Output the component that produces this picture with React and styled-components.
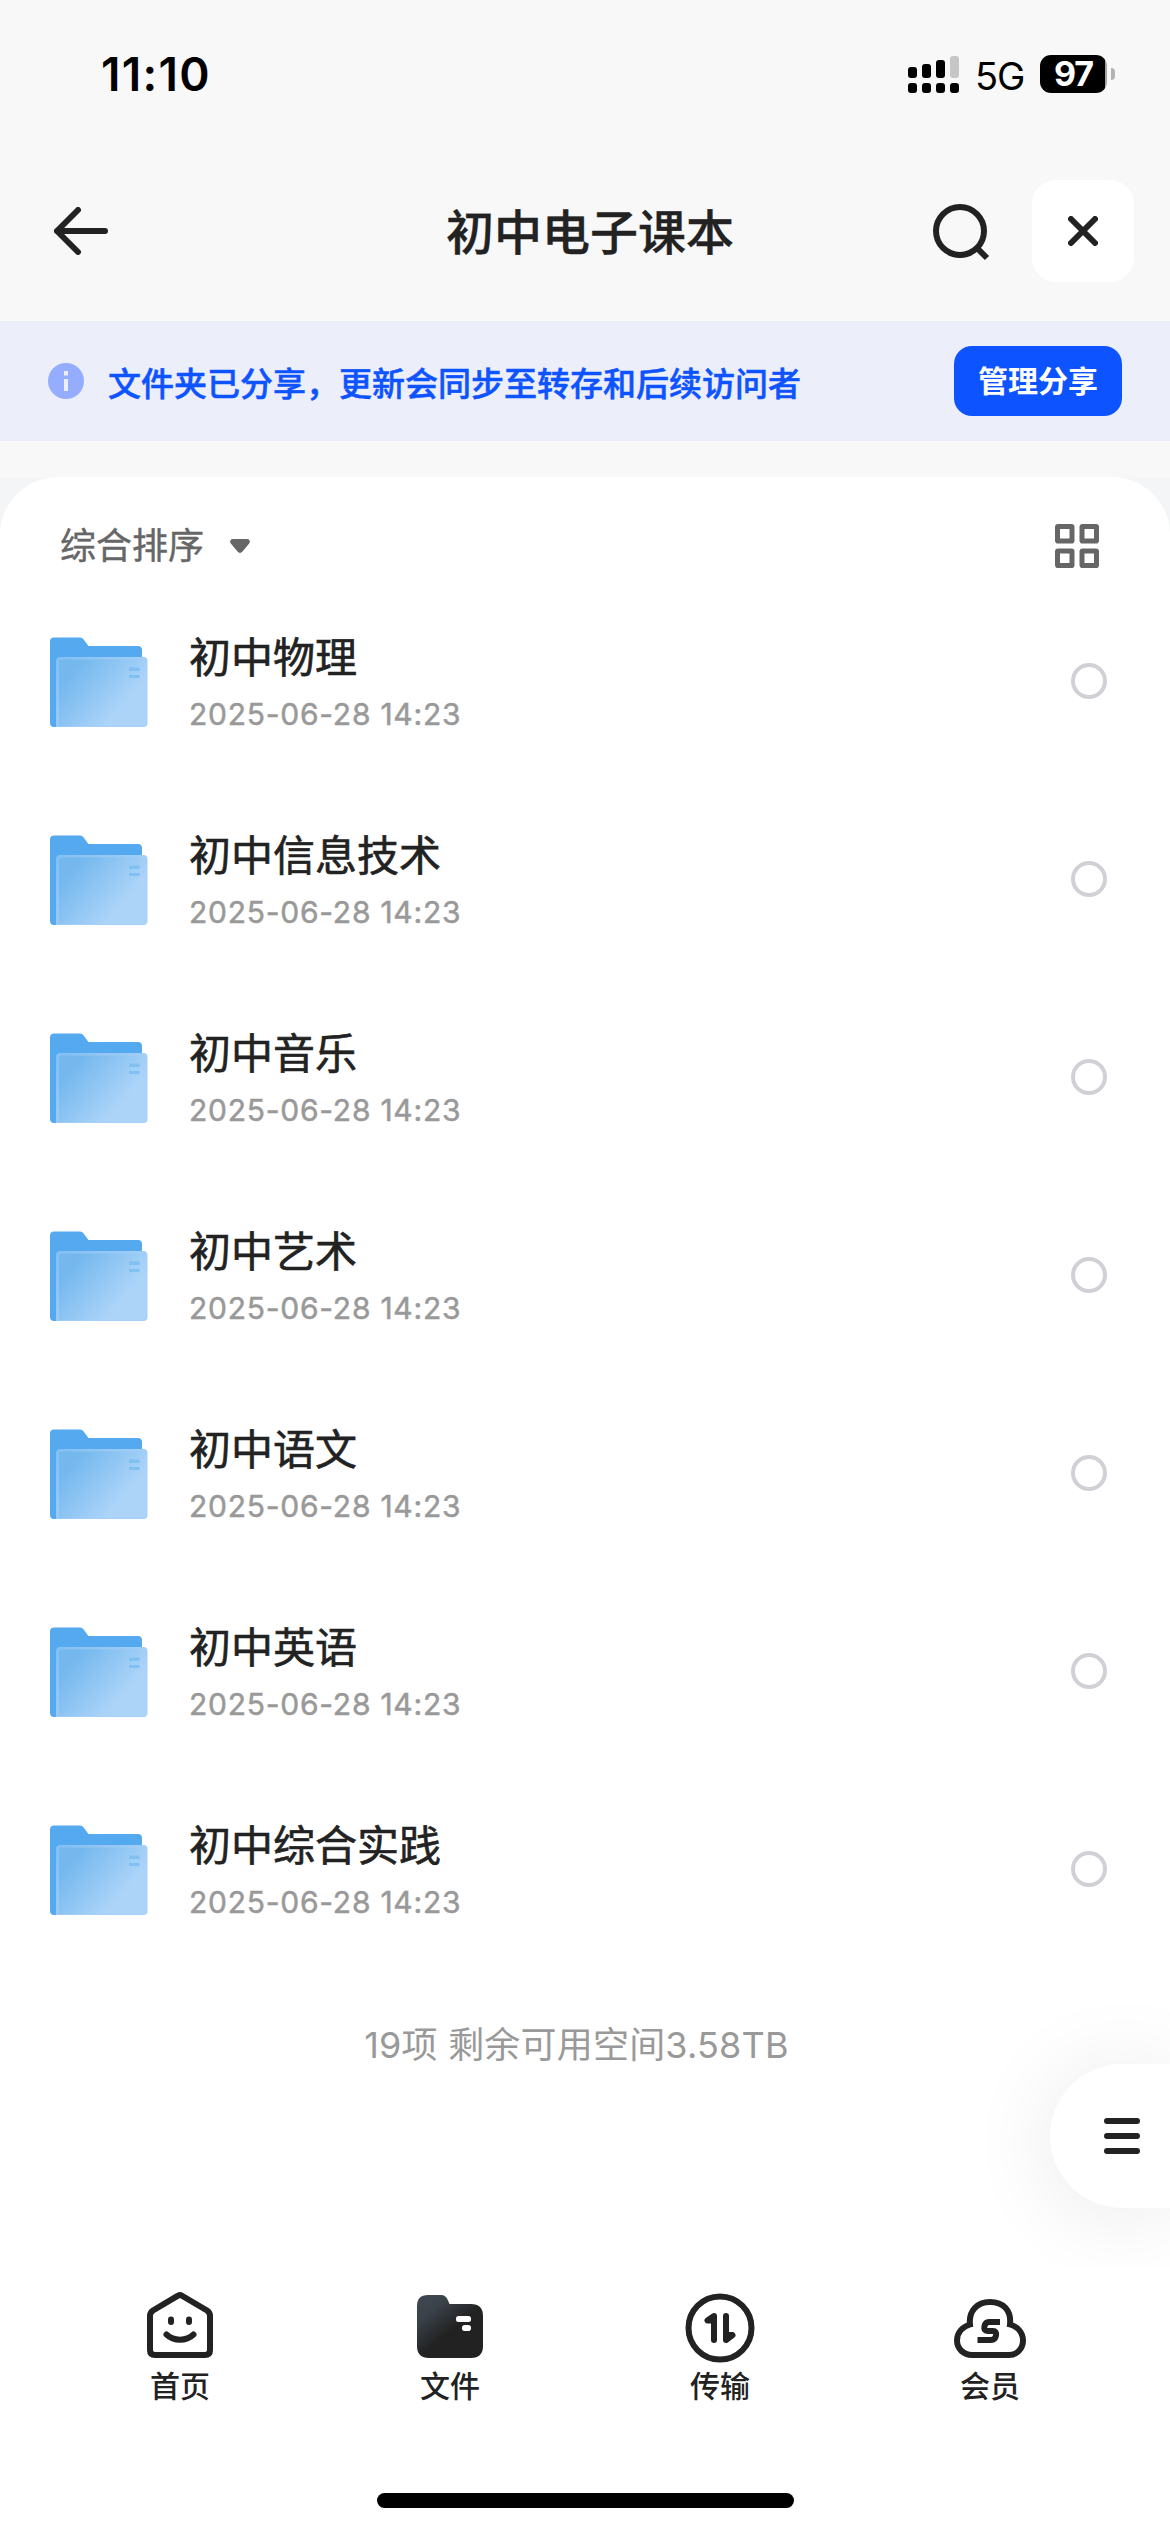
import React from 'react';
import styled, { createGlobalStyle } from 'styled-components';

const folders = [
  '初中物理',
  '初中信息技术',
  '初中音乐',
  '初中艺术',
  '初中语文',
  '初中英语',
  '初中综合实践',
];

const App = () => (
  <Screen lang="zh-CN">
    <GlobalStyle />
    <StatusBar>
      <Time>11:10</Time>
      <StatusIcons>
        <SignalIcon />
        <Network>5G</Network>
        <Battery>
          <BatteryBody>97</BatteryBody>
          <BatteryCap />
        </Battery>
      </StatusIcons>
    </StatusBar>

    <Header>
      <HeaderSide>
        <BackIcon />
      </HeaderSide>
      <Title>初中电子课本</Title>
      <HeaderSide $end>
        <SearchIcon />
        <CloseButton>
          <CloseIcon />
        </CloseButton>
      </HeaderSide>
    </Header>

    <Banner>
      <InfoIcon />
      <BannerText>文件夹已分享，更新会同步至转存和后续访问者</BannerText>
      <ManageButton>管理分享</ManageButton>
    </Banner>

    <Content>
      <Panel>
        <Toolbar>
          <Sort>
            综合排序
            <CaretIcon />
          </Sort>
          <GridIcon />
        </Toolbar>
        {folders.map((name) => (
          <FolderRow key={name} name={name} date="2025-06-28 14:23" />
        ))}
        <Summary>19项 剩余可用空间3.58TB</Summary>
        <Drawer>
          <MenuIcon />
        </Drawer>
      </Panel>
    </Content>

    <TabBar>
      <Tab><HomeIcon /><TabLabel>首页</TabLabel></Tab>
      <Tab><FilesIcon /><TabLabel>文件</TabLabel></Tab>
      <Tab><TransferIcon /><TabLabel>传输</TabLabel></Tab>
      <Tab><MemberIcon /><TabLabel>会员</TabLabel></Tab>
    </TabBar>
    <HomeArea>
      <HomeIndicator />
    </HomeArea>
  </Screen>
);

const FolderRow = (props) => (
  <Row>
    <FolderIcon />
    <RowText>
      <FolderName>{props.name}</FolderName>
      <FolderDate>{props.date}</FolderDate>
    </RowText>
    <Radio />
  </Row>
);

const SignalIcon = () => (
  <svg width="51" height="38" viewBox="0 0 51 38">
    <rect x="0" y="12" width="9" height="11" rx="3" />
    <rect x="14" y="9" width="9" height="14" rx="3" />
    <rect x="28" y="5" width="9" height="18" rx="3" />
    <rect x="42" y="1" width="9" height="22" rx="3" fill="#c6c6c6" />
    <rect x="0" y="28" width="9" height="10" rx="3" />
    <rect x="14" y="28" width="9" height="10" rx="3" />
    <rect x="28" y="28" width="9" height="10" rx="3" />
    <rect x="42" y="28" width="9" height="10" rx="3" />
  </svg>
);

const BackIcon = () => (
  <svg width="54" height="48" viewBox="0 0 54 48" fill="none" stroke="#222" strokeWidth="6" strokeLinecap="round" strokeLinejoin="round">
    <path d="M51 24H3M24 3L3 24L24 45" />
  </svg>
);

const SearchIcon = () => (
  <svg width="60" height="60" viewBox="0 0 60 60" fill="none" stroke="#222" strokeWidth="6">
    <circle cx="30" cy="30" r="24" />
    <path d="M46 46L57 57" />
  </svg>
);

const CloseIcon = () => (
  <svg width="30" height="30" viewBox="0 0 30 30" stroke="#222" strokeWidth="6" strokeLinecap="round">
    <path d="M3 3L27 27M27 3L3 27" />
  </svg>
);

const InfoIcon = () => (
  <svg width="36" height="36" viewBox="0 0 36 36">
    <circle cx="18" cy="18" r="18" fill="#94adff" />
    <rect x="16" y="8" width="4" height="4.5" fill="#eceefa" />
    <rect x="16" y="16" width="4" height="12" fill="#eceefa" />
  </svg>
);

const CaretIcon = () => (
  <svg width="20" height="14" viewBox="0 0 20 14" fill="#666">
    <path d="M3 0H17C19.700 0 20.800 2.800 19 4.800L12.300 12.800C11 14.300 9 14.300 7.700 12.800L1 4.800C-.8 2.800 .3 0 3 0Z" />
  </svg>
);

const GridIcon = () => (
  <svg width="44" height="44" viewBox="0 0 44 44" fill="none" stroke="#666" strokeWidth="5">
    <rect x="2.500" y="2.500" width="14.500" height="14.500" rx=".6" />
    <rect x="27" y="2.500" width="14.500" height="14.500" rx=".6" />
    <rect x="2.500" y="27" width="14.500" height="14.500" rx=".6" />
    <rect x="27" y="27" width="14.500" height="14.500" rx=".6" />
  </svg>
);

const FolderIcon = () => (
  <svg width="98" height="90" viewBox="0 0 98 90">
    <defs>
      <linearGradient id="front" x1="16" y1="28" x2="84" y2="86" gradientUnits="userSpaceOnUse">
        <stop offset="0.1" stopColor="#74b8ee" />
        <stop offset="0.78" stopColor="#acd4f9" />
        <stop offset="1" stopColor="#acd4f9" />
      </linearGradient>
      <linearGradient id="edge" x1="6" y1="20" x2="60" y2="70" gradientUnits="userSpaceOnUse">
        <stop offset="0" stopColor="#82bff1" />
        <stop offset="1" stopColor="#a6d0f8" />
      </linearGradient>
    </defs>
    <path d="M4 0.500H30C32 .5 33 1.500 34 3L38.500 9H88C90.500 9 92 10.500 92 13V60H10V90H4C1.500 90 0 88.500 0 86V4.500C0 2 1.500 .5 4 .5Z" fill="#55aaef" />
    <path d="M10 20H93.500C96 20 97.500 21.500 97.500 24V86C97.500 88.500 96 90 93.500 90H6V24C6 21.500 7.500 20 10 20Z" fill="url(#edge)" />
    <path d="M12 22.500H93C95 22.500 96 24 96 26V86C96 88 95 89 93 89H9V26C9 24 10 22.500 12 22.500Z" fill="url(#front)" />
    <rect x="79" y="30.500" width="10.500" height="3.500" fill="#82bff2" />
    <rect x="79" y="38" width="10.500" height="3" fill="#82bff2" />
  </svg>
);

const MenuIcon = () => (
  <svg width="36" height="36" viewBox="0 0 36 36" stroke="#222" strokeWidth="6" strokeLinecap="round">
    <path d="M3 3H33M3 18H33M3 33H33" />
  </svg>
);

const HomeIcon = () => (
  <svg width="72" height="72" viewBox="0 0 72 72" fill="none" stroke="#222" strokeWidth="6" strokeLinecap="round">
    <path d="M34 6.700Q36 5.500 38 6.700L63 21.500Q66 23.500 66 27V61Q66 66 61 66H11Q6 66 6 61V27Q6 23.500 9 21.500Z" />
    <path d="M27 30.500V33M45 30.500V33" />
    <path d="M22.500 45.500Q28 50.700 36 50.700Q44 50.700 49.500 45.500" />
  </svg>
);

const FilesIcon = () => (
  <svg width="72" height="72" viewBox="0 0 72 72">
    <defs>
      <linearGradient id="files" x1="10" y1="14" x2="34" y2="44" gradientUnits="userSpaceOnUse">
        <stop offset="0" stopColor="#3d464f" />
        <stop offset="0.3" stopColor="#394149" />
        <stop offset="1" stopColor="#222" />
      </linearGradient>
    </defs>
    <path d="M14 6H27Q32 6 34 11.500L35.500 15H57Q69 15 69 27V57Q69 69 57 69H15Q3 69 3 57V17Q3 6 14 6Z" fill="url(#files)" />
    <rect x="42" y="27" width="15" height="6" rx="2.500" fill="#fff" />
    <rect x="48" y="36" width="9" height="6" rx="2.800" fill="#fff" />
  </svg>
);

const TransferIcon = () => (
  <svg width="72" height="74" viewBox="0 0 72 74" fill="none" stroke="#222" strokeWidth="6" strokeLinecap="round" strokeLinejoin="round">
    <circle cx="36" cy="39" r="31.500" />
    <path d="M30 51V27L23.500 31.500H30" fill="#222" />
    <path d="M42 27V51L48.500 46H42" fill="#222" />
  </svg>
);

const MemberIcon = () => (
  <svg width="72" height="72" viewBox="0 0 72 72" fill="none" stroke="#222" strokeWidth="6">
    <path d="M18 66H55C63 66 69 59.500 69 51.500C69 43.500 63.500 37.800 56 35.500C57.500 21 49 13 36 13C23 13 14.500 22 16 35.500C8.500 37.800 3 43.500 3 51.500C3 59.500 9.500 66 18 66Z" />
    <path d="M46 33H35Q31.200 33 30.400 37.500Q29.600 42 33.500 42H39Q42.800 42 42 46.500Q41.200 51 37 51H23.500" />
  </svg>
);

const GlobalStyle = createGlobalStyle`
  body {
    margin: 0;
    background: #fff;
    color: #222;
    font-family: Inter, "Noto Sans CJK SC", sans-serif;
  }
  svg {
    display: block;
    flex: none;
  }
`;

const Screen = styled.div`
  display: flex;
  flex-direction: column;
  width: 1170px;
  height: 2532px;
  overflow: hidden;
  background: #f8f8f8;
`;

const StatusBar = styled.div`
  display: flex;
  justify-content: space-between;
  align-items: center;
  height: 148px;
  padding: 0 55px 0 101px;
  box-sizing: border-box;
  color: #000;
`;

const Time = styled.div`
  font-size: 46px;
  line-height: 56px;
  font-weight: 600;
  letter-spacing: 1.3px;
`;

const StatusIcons = styled.div`
  display: flex;
  align-items: center;
`;

const Network = styled.div`
  width: 48px;
  margin: 4px 17px 0 16px;
  font-size: 38px;
  line-height: 44px;
  letter-spacing: -1px;
`;

const Battery = styled.div`
  display: flex;
  align-items: center;
  gap: 4px;
`;

const BatteryBody = styled.div`
  width: 67px;
  height: 38px;
  border-radius: 11px;
  background: linear-gradient(90deg, #000 65px, #a5a5a5 65px);
  color: #fff;
  font-size: 34px;
  line-height: 38px;
  font-weight: 700;
  text-align: center;
  letter-spacing: -1px;
`;

const BatteryCap = styled.div`
  width: 4px;
  height: 12px;
  border-radius: 0 6px 6px 0;
  background: #b3b3b3;
`;

const Header = styled.div`
  display: flex;
  align-items: center;
  height: 173px;
  padding: 0 36px 7px 54px;
  box-sizing: border-box;
`;

const HeaderSide = styled.div`
  display: flex;
  align-items: center;
  justify-content: ${(props) => (props.$end ? 'flex-end' : 'flex-start')};
  gap: 42px;
  flex: 1;
`;

const Title = styled.div`
  padding: 3px 8px 0 0;
  font-size: 48px;
  line-height: 60px;
  font-weight: 500;
  -webkit-text-stroke: 0.4px currentColor;
`;

const CloseButton = styled.div`
  display: flex;
  align-items: center;
  justify-content: center;
  width: 102px;
  height: 102px;
  border-radius: 24px;
  background: #fff;
`;

const Banner = styled.div`
  display: flex;
  align-items: center;
  height: 120px;
  padding: 0 48px;
  box-sizing: border-box;
  background: #eceefa;
`;

const BannerText = styled.div`
  flex: 1;
  margin-left: 24px;
  padding-top: 2px;
  color: #0d53ff;
  font-family: "Noto Sans CJK SC", sans-serif;
  font-size: 33px;
  line-height: 40px;
  font-weight: 500;
  -webkit-text-stroke: 0.5px currentColor;
`;

const ManageButton = styled.div`
  width: 168px;
  height: 70px;
  border-radius: 18px;
  background: #0d53ff;
  color: #fff;
  font-size: 30px;
  line-height: 71px;
  font-weight: 600;
  text-align: center;
`;

const Content = styled.div`
  flex: 1;
  margin-top: 36px;
  overflow: hidden;
  background: #f4f5f7;
`;

const Panel = styled.div`
  position: relative;
  height: 100%;
  border-radius: 58px 58px 0 0;
  background: #fff;
`;

const Toolbar = styled.div`
  display: flex;
  align-items: center;
  justify-content: space-between;
  height: 74px;
  padding: 32px 71px 0 60px;
`;

const Sort = styled.div`
  display: flex;
  align-items: center;
  gap: 26px;
  color: #666;
  font-size: 36px;
  line-height: 44px;
  -webkit-text-stroke: 0.4px currentColor;
`;

const Row = styled.div`
  display: flex;
  align-items: center;
  height: 198px;
  padding: 0 63px 0 50px;
`;

const RowText = styled.div`
  flex: 1;
  margin-left: 41px;
  padding-top: 3px;
`;

const FolderName = styled.div`
  font-size: 42px;
  line-height: 52px;
  font-weight: 400;
  -webkit-text-stroke: 0.6px currentColor;
`;

const FolderDate = styled.div`
  margin-top: 9px;
  color: #999;
  font-size: 30px;
  line-height: 42px;
  letter-spacing: 0.75px;
  -webkit-text-stroke: 0.5px currentColor;
`;

const Radio = styled.div`
  width: 36px;
  height: 36px;
  margin-bottom: 2px;
  border: 4px solid #d0d0d7;
  border-radius: 50%;
  box-sizing: border-box;
`;

const Summary = styled.div`
  margin-top: 52px;
  padding-right: 17px;
  color: #999;
  font-size: 36px;
  line-height: 48px;
  letter-spacing: 0.2px;
  text-align: center;
`;

/* Floats over the right edge of the list */
const Drawer = styled.div`
  position: absolute;
  right: 0;
  bottom: 59px;
  display: flex;
  align-items: center;
  width: 120px;
  height: 144px;
  padding-left: 54px;
  box-sizing: border-box;
  border-radius: 72px 0 0 72px;
  background: #fff;
  box-shadow: 0 6px 90px rgba(0, 0, 0, 0.09);
`;

const TabBar = styled.div`
  display: flex;
  height: 181px;
  padding: 22px 45px 0;
  box-sizing: border-box;
  background: #fff;
`;

const Tab = styled.div`
  display: flex;
  flex-direction: column;
  align-items: center;
  flex: 1;
`;

const TabLabel = styled.div`
  margin-top: auto;
  margin-bottom: 42px;
  font-size: 30px;
  line-height: 40px;
  font-weight: 500;
`;

const HomeArea = styled.div`
  display: flex;
  justify-content: center;
  height: 84px;
  padding-top: 45px;
  box-sizing: border-box;
  background: #fff;
`;

const HomeIndicator = styled.div`
  width: 417px;
  height: 15px;
  border-radius: 8px;
  background: #000;
`;

export default App;
